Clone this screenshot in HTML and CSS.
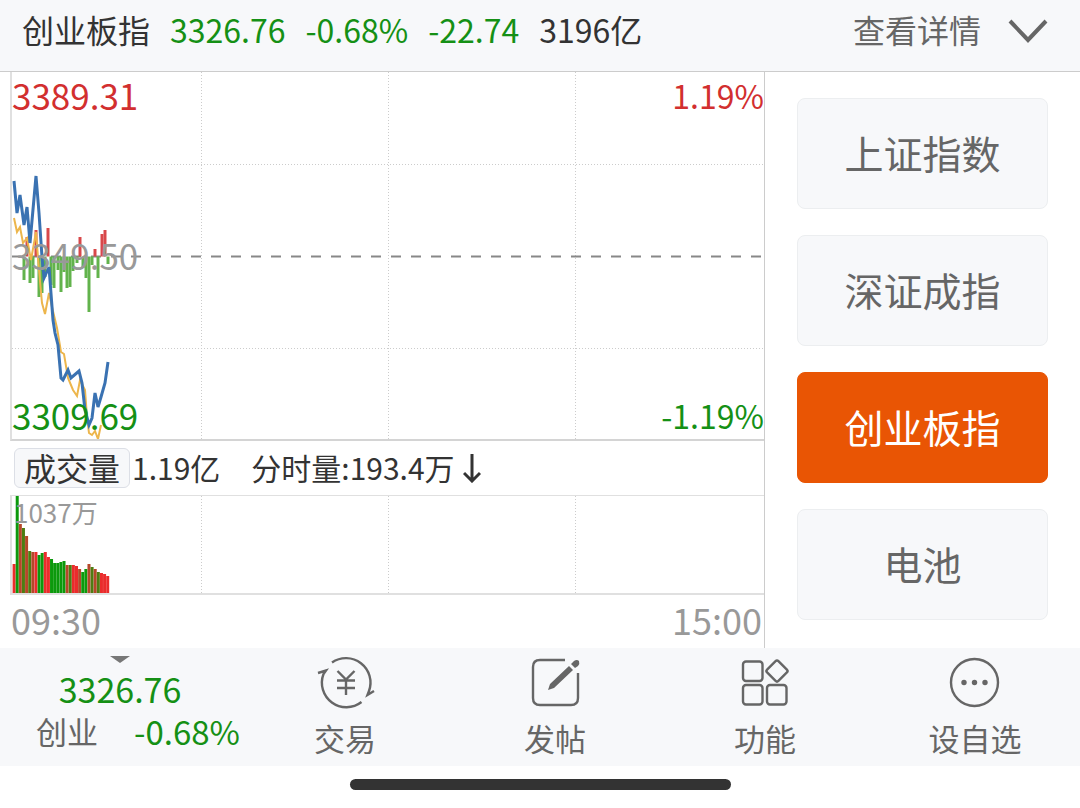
FILE: index.html
```html
<!DOCTYPE html>
<html lang="zh-CN">

<head>
  <meta charset="utf-8">
  <meta name="viewport" content="width=device-width, initial-scale=1">
  <title>创业板指</title>
  <link rel="stylesheet" href="styles.css">
</head>

<body>

  <header class="top">
    <h1>创业板指</h1>
    <span class="down">3326.76</span>
    <span class="down">-0.68%</span>
    <span class="down">-22.74</span>
    <span>3196亿</span>
    <button class="detail" type="button">查看详情
      <svg width="40" height="28" viewBox="0 0 40 28"><path d="M2 6 20 25 38 6" /></svg>
    </button>
  </header>

  <main class="main">
    <section class="chart">
      <div class="plot">
        <svg id="price" viewBox="12 72 752 367">
          <path class="grid" d="M12 164.5H764M12 348.5H764M201.5 72V440M388.5 72V440M575.5 72V440" />
          <path class="mid" d="M11 256.5H764" />
          <g id="force"></g>
          <polyline class="avg" points="14,218 17,232 20,227 23,243 27,238 31,260 36,232 39,270 42,303 45,314 49,293 52,307 57,328 61,352 64,354 68,378 73,390 77,396 80,380 85,390 87,417 89,433 92,435 95,431 98,439 101,425" />
          <polyline class="line" points="14,181 17,213 20,195 24,225 27,207 30,243 36,176 39,213 42,257 44,278 49,267 53,320 55,333 58,345 61,378 63,380 68,370 71,378 79,371 82,383 85,410 89,425 92,418 95,393 98,407 101,397 105,383 108,362" />
        </svg>
        <span class="tag tl up">3389.31</span>
        <span class="tag tr up">1.19%</span>
        <span class="tag ml">3349.50</span>
        <span class="tag bl down">3309.69</span>
        <span class="tag br down">-1.19%</span>
      </div>
      <div class="info">
        <button class="pick" type="button">成交量</button>
        <span class="total">1.19亿</span>
        <span>分时量:193.4万</span>
        <svg width="18" height="30" viewBox="0 0 18 30"><path d="M9 1V28M1 20 9 28 17 20" /></svg>
      </div>
      <div class="plot volume">
        <svg viewBox="12 496 752 97">
          <path class="grid" d="M201.5 496V594M388.5 496V594M575.5 496V594" />
          <g id="bars"></g>
        </svg>
        <span class="tag vol">1037万</span>
      </div>
      <div class="times"><span>09:30</span><span>15:00</span></div>
    </section>

    <aside class="side">
      <button type="button">上证指数</button>
      <button type="button">深证成指</button>
      <button type="button" class="active">创业板指</button>
      <button type="button">电池</button>
    </aside>
  </main>

  <nav class="tabs">
    <a href="#index" class="quote">
      <svg width="20" height="7" viewBox="0 0 20 7"><path d="M0 0H20L10 7Z" /></svg>
      <span class="price down">3326.76</span>
      <span class="row"><span>创业</span><span class="down rate">-0.68%</span></span>
    </a>
    <a href="#trade">
      <svg class="icon" stroke-width="2.4" width="60" height="52" viewBox="0 0 60 52">
        <path d="M17 4.500A24.500 24.500 0 0 1 54 33L52.500 37 59 33M46.500 44A24.500 24.500 0 0 1 8.500 16L11 12.500 3 15" />
        <path d="M22.500 13 31 21.500 39.500 13M31 21.500V37M22 22.500H40M22 30H40" />
      </svg>
      交易
    </a>
    <a href="#post">
      <svg class="icon" stroke-width="2.4" width="60" height="52" viewBox="0 0 60 52">
        <path d="M40 2H15Q8 2 8 9V40Q8 47 15 47H46Q53 47 53 40V15" />
        <path class="fill" d="M44 8 48 12 29 30 23 32 25 26ZM46 6 49 3Q52 1 54 3Q55 6 53 8L50 10Z" />
      </svg>
      发帖
    </a>
    <a href="#more">
      <svg class="icon" stroke-width="2.4" width="60" height="52" viewBox="0 0 60 52">
        <rect x="8" y="3.500" width="19.500" height="19.500" rx="3" />
        <rect x="8" y="27" width="19.500" height="19.500" rx="3" />
        <rect x="32" y="27" width="19.500" height="19.500" rx="3" />
        <rect x="34" y="5" width="16" height="16" rx="2" transform="rotate(45 42 13)" />
      </svg>
      功能
    </a>
    <a href="#watch">
      <svg class="icon" stroke-width="2.4" width="60" height="52" viewBox="0 0 60 52">
        <circle cx="29.500" cy="24.500" r="23.500" />
        <g class="fill"><circle cx="19" cy="24.500" r="2.700" /><circle cx="29.500" cy="24.500" r="2.700" /><circle cx="40" cy="24.500" r="2.700" /></g>
      </svg>
      设自选
    </a>
  </nav>
  <div class="home"></div>

  <script>
    // [x, y] ends of the bars around the middle line
    let force = [
      [27, 237], [36, 230], [48, 228], [80, 237], [95, 249], [102, 234], [105, 230],
      [24, 280], [30, 283], [33, 278], [39, 297], [42, 293], [45, 277], [51, 285], [54, 288],
      [58, 270], [61, 292], [64, 272], [67, 288], [70, 287], [73, 271], [77, 263], [83, 268],
      [86, 278], [89, 312], [92, 265], [98, 278], [108, 264]
    ];
    document.getElementById("force").innerHTML = force.map(([x, y]) =>
      `<path class="${y < 256 ? "up" : "down"}" d="M${x} 256.5V${y}"/>`
    ).join("");

    let volumes = [30, 98, 70, 66, 58, 43, 42, 42, 39, 41, 42, 37, 35, 31, 31, 32, 33, 29, 29, 29, 28, 25, 22, 25, 30, 27, 25, 22, 21, 20, 18];
    let kinds = "rgbobobrggrrgggggborrbggboborrr";
    document.getElementById("bars").innerHTML = volumes.map((v, i) =>
      `<rect class="${kinds[i]}" x="${12.6 + i * 3.12}" y="${594 - v}" width="3" height="${v}"/>`
    ).join("");
  </script>
</body>

</html>
```
FILE: styles.css
```css
* {
  box-sizing: border-box;
}

body {
  margin: 0;
  background-color: #fff;
  color: #333;
  font-family: "Noto Sans CJK SC", sans-serif;
  font-size: 32px;
  line-height: 40px;
}

button {
  padding: 0;
  border: 0;
  background: none;
  color: inherit;
  font: inherit;
  cursor: pointer;
}

svg {
  display: block;
  fill: none;
}

.up {
  color: #d22f2f;
}

.down {
  color: #159015;
}

.top {
  display: flex;
  align-items: center;
  gap: 20px;
  padding: 9px 32px 22px 22px;
  background-color: #f7f8fa;
  border-bottom: 1px solid #ccc;
}

h1 {
  margin: 0;
  font-size: inherit;
  font-weight: 400;
}

.detail {
  display: flex;
  align-items: center;
  gap: 27px;
  margin-left: auto;
  color: #666;
}

.detail svg,
.info svg {
  stroke: currentColor;
  stroke-width: 4px;
}

.main {
  display: flex;
}

.chart {
  flex: 1;
  padding-left: 10px;
  border-right: 1px solid #ccc;
}

.plot {
  position: relative;
  border-left: 2px solid #e0e0e0;
  border-bottom: 2px solid #d4d4d4;
}

.plot svg {
  width: 100%;
  height: auto;
}

.grid {
  stroke: #ccc;
  stroke-dasharray: 1 2;
}

.mid {
  stroke: #888;
  stroke-width: 2px;
  stroke-dasharray: 10 10;
}

.avg {
  stroke: #edb64c;
  stroke-width: 2px;
}

.line {
  stroke: #3a72b2;
  stroke-width: 3px;
}

#force .up {
  stroke: #d8484a;
  stroke-width: 3px;
}

#force .down {
  stroke: #62b34c;
  stroke-width: 3px;
}

.tag {
  position: absolute;
  font-size: 35px;
}

.tl {
  top: 3px;
  left: 0;
}

.tr {
  top: 3px;
  right: 0;
}

.ml {
  top: 50%;
  left: 0;
  margin-top: -21px;
  color: #999;
}

.bl {
  bottom: 4px;
  left: 0;
}

.br {
  bottom: 4px;
  right: 0;
}

.tr,
.br {
  font-size: 32px;
}

.info {
  display: flex;
  align-items: center;
  height: 54px;
  padding-left: 2px;
  font-size: 30px;
  line-height: 36px;
}

.pick {
  height: 40px;
  margin: 0 2px;
  padding: 0 9px 2px;
  border: 1px solid #dcdfe6;
  border-radius: 6px;
  background-color: #f7f8fa;
  font-size: 32px;
}

.info span {
  padding-bottom: 3px;
}

.total {
  margin-right: 31px;
}

.info svg {
  margin-left: 8px;
  stroke-width: 3px;
}

.volume {
  border-top: 1px solid #e0e0e0;
  border-bottom-color: #e0e0e0;
}

.vol {
  top: -4px;
  left: 2px;
  color: #999;
  font-size: 26px;
}

.r {
  fill: #ea2c2c;
}

.g {
  fill: #0c990c;
}

.b {
  fill: #b5482a;
}

.o {
  fill: #4d7d12;
}

.times {
  display: flex;
  justify-content: space-between;
  padding: 4px 2px 9px 1px;
  color: #999;
  font-size: 36px;
}

.side {
  display: flex;
  flex-direction: column;
  gap: 26px;
  width: 315px;
  padding: 26px 32px 0;
}

.side button {
  height: 111px;
  padding-bottom: 4px;
  border: 1px solid #eceef0;
  border-radius: 8px;
  background-color: #f7f8fa;
  color: #666;
  font-size: 39px;
}

.side .active {
  border-color: #e95504;
  background-color: #e95504;
  color: #fff;
}

.tabs {
  display: grid;
  grid-template-columns: 240px repeat(4, 1fr);
  height: 118px;
  background-color: #f7f8fa;
}

.tabs a {
  display: flex;
  flex-direction: column;
  align-items: center;
  gap: 8px;
  padding-top: 10px;
  color: #666;
  font-size: 31px;
  text-decoration: none;
}

.icon {
  overflow: visible;
  stroke: #666;
}

.icon .fill {
  fill: #666;
  stroke: none;
}

.tabs .quote {
  gap: 0;
  padding-top: 8px;
}

.quote svg {
  fill: #777;
}

.price {
  margin-top: 6px;
  font-size: 34px;
}

.row {
  display: flex;
  gap: 36px;
  margin: 2px 0 0 36px;
  align-self: flex-start;
}

.tabs .down {
  color: #159015;
}

.rate {
  font-size: 33px;
}

.home {
  width: 381px;
  height: 11px;
  margin: 13px auto;
  border-radius: 6px;
  background-color: #333;
}
```
